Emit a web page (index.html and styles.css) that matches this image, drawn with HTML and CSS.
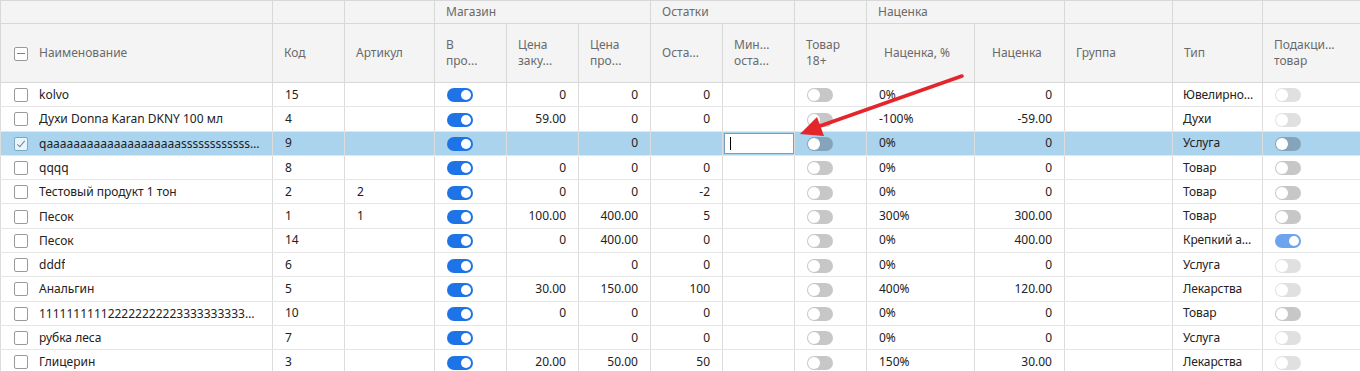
FILE: index.html
```html
<!DOCTYPE html>
<html lang="ru">
<head>
    <meta charset="UTF-8">
    <meta name="viewport" content="width=device-width, initial-scale=1.0">
    <title>Товары</title>
    <link rel="stylesheet" href="styles.css">
</head>
<body>
    <div class="grid-wrap">
        <table class="grid">
            <colgroup>
                <col style="width:272px"><col style="width:72px"><col style="width:90px">
                <col style="width:72px"><col style="width:72px"><col style="width:72px">
                <col style="width:72px"><col style="width:72px"><col style="width:72px">
                <col style="width:108px"><col style="width:90px"><col style="width:108px">
                <col style="width:90px"><col style="width:98px">
            </colgroup>
            <thead>
                <tr class="group-row">
                    <th></th><th></th><th></th>
                    <th colspan="3">Магазин</th>
                    <th colspan="2">Остатки</th>
                    <th></th>
                    <th colspan="2">Наценка</th>
                    <th></th><th></th><th></th>
                </tr>
                <tr class="title-row">
                    <th><span class="check minus"></span>Наименование</th>
                    <th>Код</th>
                    <th>Артикул</th>
                    <th>В<br>про...</th>
                    <th>Цена<br>заку...</th>
                    <th>Цена<br>про...</th>
                    <th>Оста...</th>
                    <th>Мин...<br>оста...</th>
                    <th>Товар<br>18+</th>
                    <th class="wide-pad">Наценка, %</th>
                    <th class="wide-pad">Наценка</th>
                    <th>Группа</th>
                    <th>Тип</th>
                    <th>Подакци...<br>товар</th>
                </tr>
            </thead>
            <tbody>
                <tr>
                    <td class="name"><span class="check"></span><span class="txt">kolvo</span></td>
                    <td>15</td><td></td>
                    <td><span class="toggle on"></span></td>
                    <td class="num">0</td><td class="num">0</td><td class="num">0</td><td></td>
                    <td><span class="toggle"></span></td>
                    <td>0%</td><td class="num">0</td><td></td>
                    <td class="cut">Ювелирное изделие</td>
                    <td><span class="toggle dim"></span></td>
                </tr>
                <tr>
                    <td class="name"><span class="check"></span><span class="txt">Духи Donna Karan DKNY 100 мл</span></td>
                    <td>4</td><td></td>
                    <td><span class="toggle on"></span></td>
                    <td class="num">59.00</td><td class="num">0</td><td class="num">0</td><td></td>
                    <td><span class="toggle"></span></td>
                    <td>-100%</td><td class="num">-59.00</td><td></td>
                    <td class="cut">Духи</td>
                    <td><span class="toggle dim"></span></td>
                </tr>
                <tr class="selected">
                    <td class="name"><span class="check checked"></span><span class="txt">qaaaaaaaaaaaaaaaaaaaassssssssssssssssssssssssssssss</span></td>
                    <td>9</td><td></td>
                    <td><span class="toggle on"></span></td>
                    <td class="num"></td><td class="num">0</td><td class="num"></td>
                    <td class="edit"><div class="cell-input"><span class="caret"></span></div></td>
                    <td><span class="toggle"></span></td>
                    <td>0%</td><td class="num">0</td><td></td>
                    <td class="cut">Услуга</td>
                    <td><span class="toggle"></span></td>
                </tr>
                <tr>
                    <td class="name"><span class="check"></span><span class="txt">qqqq</span></td>
                    <td>8</td><td></td>
                    <td><span class="toggle on"></span></td>
                    <td class="num">0</td><td class="num">0</td><td class="num">0</td><td></td>
                    <td><span class="toggle"></span></td>
                    <td>0%</td><td class="num">0</td><td></td>
                    <td class="cut">Товар</td>
                    <td><span class="toggle"></span></td>
                </tr>
                <tr>
                    <td class="name"><span class="check"></span><span class="txt">Тестовый продукт 1 тон</span></td>
                    <td>2</td><td>2</td>
                    <td><span class="toggle on"></span></td>
                    <td class="num">0</td><td class="num">0</td><td class="num">-2</td><td></td>
                    <td><span class="toggle"></span></td>
                    <td>0%</td><td class="num">0</td><td></td>
                    <td class="cut">Товар</td>
                    <td><span class="toggle"></span></td>
                </tr>
                <tr>
                    <td class="name"><span class="check"></span><span class="txt">Песок</span></td>
                    <td>1</td><td>1</td>
                    <td><span class="toggle on"></span></td>
                    <td class="num">100.00</td><td class="num">400.00</td><td class="num">5</td><td></td>
                    <td><span class="toggle"></span></td>
                    <td>300%</td><td class="num">300.00</td><td></td>
                    <td class="cut">Товар</td>
                    <td><span class="toggle"></span></td>
                </tr>
                <tr>
                    <td class="name"><span class="check"></span><span class="txt">Песок</span></td>
                    <td>14</td><td></td>
                    <td><span class="toggle on"></span></td>
                    <td class="num">0</td><td class="num">400.00</td><td class="num">0</td><td></td>
                    <td><span class="toggle"></span></td>
                    <td>0%</td><td class="num">400.00</td><td></td>
                    <td class="cut">Крепкий алкоголь</td>
                    <td><span class="toggle on faded"></span></td>
                </tr>
                <tr>
                    <td class="name"><span class="check"></span><span class="txt">dddf</span></td>
                    <td>6</td><td></td>
                    <td><span class="toggle on"></span></td>
                    <td class="num"></td><td class="num">0</td><td class="num">0</td><td></td>
                    <td><span class="toggle"></span></td>
                    <td>0%</td><td class="num">0</td><td></td>
                    <td class="cut">Услуга</td>
                    <td><span class="toggle dim"></span></td>
                </tr>
                <tr>
                    <td class="name"><span class="check"></span><span class="txt">Анальгин</span></td>
                    <td>5</td><td></td>
                    <td><span class="toggle on"></span></td>
                    <td class="num">30.00</td><td class="num">150.00</td><td class="num">100</td><td></td>
                    <td><span class="toggle"></span></td>
                    <td>400%</td><td class="num">120.00</td><td></td>
                    <td class="cut">Лекарства</td>
                    <td><span class="toggle dim"></span></td>
                </tr>
                <tr>
                    <td class="name"><span class="check"></span><span class="txt">111111111122222222223333333333444444444455555</span></td>
                    <td>10</td><td></td>
                    <td><span class="toggle on"></span></td>
                    <td class="num">0</td><td class="num">0</td><td class="num">0</td><td></td>
                    <td><span class="toggle"></span></td>
                    <td>0%</td><td class="num">0</td><td></td>
                    <td class="cut">Товар</td>
                    <td><span class="toggle"></span></td>
                </tr>
                <tr>
                    <td class="name"><span class="check"></span><span class="txt">рубка леса</span></td>
                    <td>7</td><td></td>
                    <td><span class="toggle on"></span></td>
                    <td class="num"></td><td class="num">0</td><td class="num">0</td><td></td>
                    <td><span class="toggle"></span></td>
                    <td>0%</td><td class="num">0</td><td></td>
                    <td class="cut">Услуга</td>
                    <td><span class="toggle dim"></span></td>
                </tr>
                <tr>
                    <td class="name"><span class="check"></span><span class="txt">Глицерин</span></td>
                    <td>3</td><td></td>
                    <td><span class="toggle on"></span></td>
                    <td class="num">20.00</td><td class="num">50.00</td><td class="num">50</td><td></td>
                    <td><span class="toggle"></span></td>
                    <td>150%</td><td class="num">30.00</td><td></td>
                    <td class="cut">Лекарства</td>
                    <td><span class="toggle dim"></span></td>
                </tr>
            </tbody>
        </table>

        <!-- стрелка-подсказка поверх таблицы -->
        <svg class="pointer" width="1360" height="371" viewBox="0 0 1360 371">
            <line x1="962" y1="76" x2="820" y2="126" stroke="#e3262b" stroke-width="3.5" stroke-linecap="round"/>
            <polygon points="800,134 824,136 817,117" fill="#e3262b"/>
        </svg>
    </div>
</body>
</html>
```

FILE: styles.css
```css
body {
    margin: 0;
    font-family: "Noto Sans", "Open Sans", Arial, sans-serif;
    font-size: 12px;
    color: #222222;
    background-color: #ffffff;
    overflow: hidden;
}

.grid-wrap {
    position: relative;
    width: 1360px;
    height: 371px;
    overflow: hidden;
}

/* Таблица */
.grid {
    width: 1360px;
    table-layout: fixed;
    border-collapse: collapse;
}

.grid th,
.grid td {
    padding: 0 12px;
    text-align: left;
    white-space: nowrap;
    overflow: hidden;
    vertical-align: middle;
}

.grid th {
    background-color: #f4f4f4;
    color: #6a6a6a;
    font-weight: normal;
    line-height: 16px;
    border: 1px solid #d8d8d8;
}

.group-row th {
    height: 22px;
    padding: 0 11px;
}

.title-row th {
    height: 58px;
    padding: 0 11px;
}

.title-row th:first-child {
    padding-left: 13px;
}

.title-row th.wide-pad {
    padding-left: 17px;
}

.grid td {
    height: 23.3px;
    border-left: 1px solid #dcdcdc;
    border-right: 1px solid #dcdcdc;
    border-bottom: 1px solid #e6e6e6;
    line-height: 16px;
}

.grid td.num {
    text-align: right;
}

.grid td.cut {
    text-overflow: ellipsis;
    padding: 0 7px 0 10px;
    letter-spacing: -0.1px;
}

.grid td.name {
    padding-left: 13px;
}

.grid td.name .txt {
    display: inline-block;
    vertical-align: middle;
    max-width: 222px;
    overflow: hidden;
    text-overflow: ellipsis;
}

.grid tr.selected td {
    background-color: #aad3ee;
}

.grid td.edit {
    padding: 0 1px;
}

.cell-input {
    box-sizing: border-box;
    width: 70px;
    height: 21px;
    border: 1px solid #7c9dbd;
    background-color: #ffffff;
    padding: 3px 5px;
}

.caret {
    display: block;
    width: 1px;
    height: 13px;
    background-color: #000000;
}

/* Чекбокси */
.check {
    display: inline-block;
    box-sizing: border-box;
    width: 14px;
    height: 14px;
    border: 1px solid #9a9a9a;
    border-radius: 2px;
    background-color: #ffffff;
    vertical-align: middle;
    margin-right: 11px;
    position: relative;
}

.check.minus::after {
    content: "";
    position: absolute;
    left: 2px;
    right: 2px;
    top: 5px;
    height: 1px;
    background-color: #808080;
}

.check.checked {
    border-color: #7fa8c4;
    background-color: #eaf4fb;
}

.check.checked::after {
    content: "";
    position: absolute;
    left: 4px;
    top: 1px;
    width: 3px;
    height: 7px;
    border-right: 1px solid #5f87a8;
    border-bottom: 1px solid #5f87a8;
    transform: rotate(40deg);
}

/* Перемикачі */
.toggle {
    display: inline-block;
    vertical-align: middle;
    position: relative;
    width: 26px;
    height: 14px;
    border-radius: 7px;
    background-color: rgba(0, 0, 0, 0.22);
}

.toggle::after {
    content: "";
    position: absolute;
    left: 1px;
    top: 1px;
    width: 12px;
    height: 12px;
    border-radius: 50%;
    background-color: #ffffff;
}

.toggle.dim {
    background-color: rgba(0, 0, 0, 0.12);
}

.toggle.on {
    background-color: #1e74e6;
}

.toggle.on::after {
    left: auto;
    right: 2px;
    top: 2px;
    width: 10px;
    height: 10px;
}

.toggle.faded {
    opacity: 0.65;
}

/* Стрілка */
.pointer {
    position: absolute;
    left: 0;
    top: 0;
    pointer-events: none;
}
```
